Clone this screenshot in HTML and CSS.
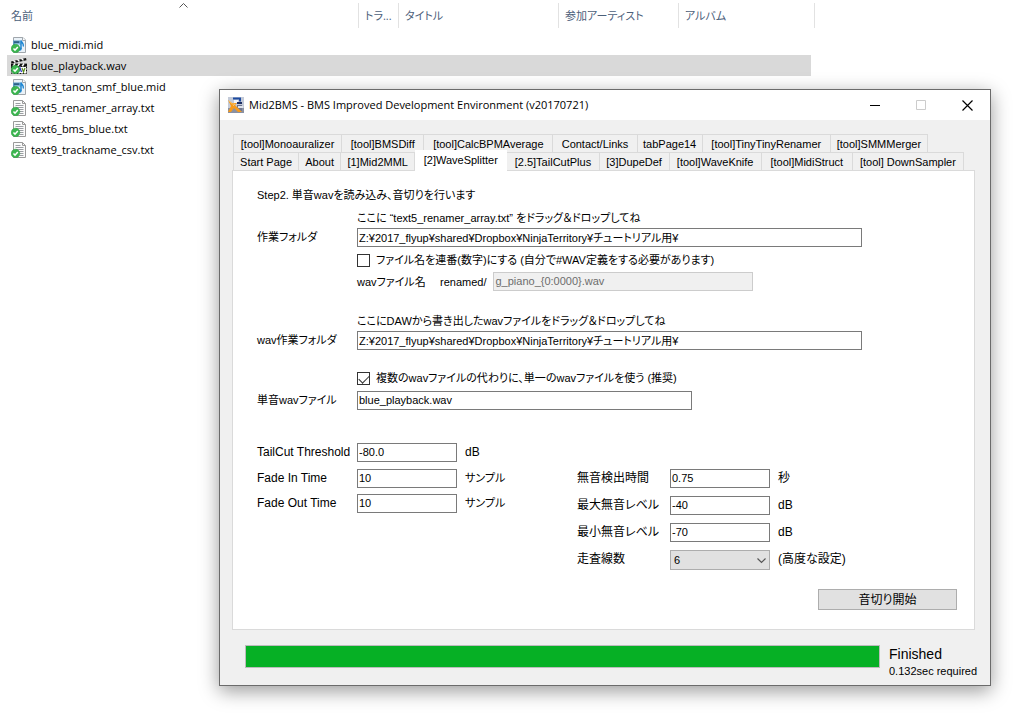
FILE: index.html
```html
<!DOCTYPE html>
<html lang="ja">
<head>
<meta charset="utf-8">
<title>Mid2BMS</title>
<link rel="stylesheet" href="styles.css">
</head>
<body>
<svg class="defs" aria-hidden="true">
  <defs>
    <symbol id="ok" viewBox="0 0 16 16">
      <circle cx="4.500" cy="11.500" r="4.300" fill="#3cb650" stroke="#2a9a3f" stroke-width=".5"/>
      <path d="M2.500 11.600l1.500 1.600L6.800 10" fill="none" stroke="#fff" stroke-width="1.500"/>
    </symbol>
    <symbol id="mid" viewBox="0 0 16 16">
      <path d="M2.500.5h9.500l2.500 2.500v12.500h-12z" fill="#eaf2f8" stroke="#a0a6ac"/>
      <path d="M11.500.5v3h3" fill="#fff" stroke="#a0a6ac"/>
      <path d="M2 3.500h7.500V8H2z" fill="#5b9bc6"/>
      <path d="M3 4.500h5v1.200H3z" fill="#1e4868"/>
      <path d="M4 6.500h5V8H4z" fill="#a9d3ee"/>
      <path d="M10 12V3.500c.6 2.500 3.200 2.800 2.300 6" fill="none" stroke="#1f86d2" stroke-width="1.500"/>
      <ellipse cx="8.800" cy="12" rx="1.900" ry="1.700" fill="#1f86d2"/>
      <use href="#ok"/>
    </symbol>
    <symbol id="txt" viewBox="0 0 16 16">
      <path d="M2.500.5h9l3 3v12h-12z" fill="#fbfbfb" stroke="#9a9a9a"/>
      <path d="M11.500.5v3h3" fill="none" stroke="#9a9a9a"/>
      <path d="M4.500 3.500h5M4.500 5.500h8M4.500 7.500h8M4.500 9.500h8M6.500 11.500h6M8.500 13.500h4" stroke="#9a9ea2"/>
      <use href="#ok"/>
    </symbol>
    <symbol id="wav" viewBox="0 0 16 16">
      <path d="M0 5h16v11H0z" fill="#fff"/>
      <path d="M0 3.500l15-3.500.5 2.200L.5 5.500z" fill="#111"/>
      <path d="M2.500 2.500l2 2M6.500 1.500l2 2M10.500.6l2 2" stroke="#fff" stroke-width="1.400"/>
      <path d="M0 5.500h16v3H0z" fill="#111"/>
      <path d="M2 8.500l2-3M6.500 8.500l2-3M11 8.500l2-3" stroke="#fff" stroke-width="1.400"/>
      <path d="M.5 8.500h15v7H.5z" fill="none" stroke="#111" stroke-dasharray="2 1"/>
      <path d="M7.500 14l1.500-4 1.500 4" fill="none" stroke="#2426c8" stroke-width="1.200"/>
      <path d="M11 10l1.500 4 1.500-4" fill="none" stroke="#5c8f1e" stroke-width="1.200"/>
      <use href="#ok"/>
    </symbol>
  </defs>
</svg>

<main class="explorer">
  <div class="columns">
    <div class="column">名前
      <svg class="sort" viewBox="0 0 9 5" aria-hidden="true"><path d="M.5 4.500l4-4 4 4" fill="none" stroke="#555"/></svg>
    </div>
    <div class="column">トラ...</div>
    <div class="column">タイトル</div>
    <div class="column">参加アーティスト</div>
    <div class="column">アルバム</div>
  </div>
  <ul class="files">
    <li class="file"><svg class="file-icon"><use href="#mid"/></svg>blue_midi.mid</li>
    <li class="file selected"><svg class="file-icon"><use href="#wav"/></svg>blue_playback.wav</li>
    <li class="file"><svg class="file-icon"><use href="#mid"/></svg>text3_tanon_smf_blue.mid</li>
    <li class="file"><svg class="file-icon"><use href="#txt"/></svg>text5_renamer_array.txt</li>
    <li class="file"><svg class="file-icon"><use href="#txt"/></svg>text6_bms_blue.txt</li>
    <li class="file"><svg class="file-icon"><use href="#txt"/></svg>text9_trackname_csv.txt</li>
  </ul>
</main>

<section class="window">
  <header class="titlebar">
    <svg class="app-icon" viewBox="0 0 16 16" aria-hidden="true">
      <path d="M0 0h16v16H0z" fill="#c3cad8"/>
      <path d="M0 11h16v5H0z" fill="#8a91a3"/>
      <path d="M5 1.500h7v3" fill="none" stroke="#1d4aa0" stroke-width="2"/>
      <path d="M6 3h4v3H6z" fill="#f2f5fa"/>
      <path d="M9 5h5v2H9z" fill="#1c2f63"/>
      <path d="M9 8h5v6H9z" fill="#6d7690"/>
      <path d="M10 9h5v2h-5z" fill="#dfe3ec"/>
      <path d="M0 3l4 3h5l-2 2 7 7h-4L6 11l-3 4H0l3-6z" fill="#f59a1c"/>
      <path d="M1 4l3.500 3H7L5 9" fill="none" stroke="#fbc263"/>
    </svg>
    <h1 class="title">Mid2BMS - BMS Improved Development Environment (v20170721)</h1>
    <button class="caption" aria-label="最小化"><svg viewBox="0 0 11 11"><path d="M0 5.500h10" stroke="#000"/></svg></button>
    <button class="caption" aria-label="最大化" disabled><svg viewBox="0 0 11 11"><path d="M.5.5h9v9h-9z" fill="none" stroke="#ccc"/></svg></button>
    <button class="caption" aria-label="閉じる"><svg viewBox="0 0 11 11"><path d="M.5.5l10 10M10.500.5l-10 10" stroke="#000" stroke-width="1.200"/></svg></button>
  </header>

  <div class="client">
    <div class="tabs" role="tablist">
      <div class="tab-row tab-row-back">
        <button class="tab" role="tab">[tool]Monoauralizer</button>
        <button class="tab" role="tab">[tool]BMSDiff</button>
        <button class="tab" role="tab">[tool]CalcBPMAverage</button>
        <button class="tab" role="tab">Contact/Links</button>
        <button class="tab" role="tab">tabPage14</button>
        <button class="tab" role="tab">[tool]TinyTinyRenamer</button>
        <button class="tab" role="tab">[tool]SMMMerger</button>
      </div>
      <div class="tab-row tab-row-front">
        <button class="tab" role="tab">Start Page</button>
        <button class="tab" role="tab">About</button>
        <button class="tab" role="tab">[1]Mid2MML</button>
        <button class="tab active" role="tab" aria-selected="true">[2]WaveSplitter</button>
        <button class="tab" role="tab">[2.5]TailCutPlus</button>
        <button class="tab" role="tab">[3]DupeDef</button>
        <button class="tab" role="tab">[tool]WaveKnife</button>
        <button class="tab" role="tab">[tool]MidiStruct</button>
        <button class="tab" role="tab">[tool] DownSampler</button>
      </div>
    </div>

    <form class="panel">
      <p class="step">Step2. 単音wavを読み込み、音切りを行います</p>

      <div class="group group-work">
        <p class="hint">ここに “text5_renamer_array.txt” をドラッグ＆ドロップしてね</p>
        <label class="label" for="work">作業フォルダ</label>
        <input class="box path" id="work" type="text" value="Z:¥2017_flyup¥shared¥Dropbox¥NinjaTerritory¥チュートリアル用¥">
        <div class="field check"><input class="tick" id="serial" type="checkbox"><label for="serial">ファイル名を連番(数字)にする (自分で#WAV定義をする必要があります)</label></div>
        <div class="field rename">
          <label for="pattern"><span class="rename-name">wavファイル名</span>renamed/</label>
          <input class="box pattern" id="pattern" type="text" value="g_piano_{0:0000}.wav" disabled>
        </div>
      </div>

      <div class="group group-wav">
        <p class="hint">ここにDAWから書き出したwavファイルをドラッグ＆ドロップしてね</p>
        <label class="label" for="wavdir">wav作業フォルダ</label>
        <input class="box path" id="wavdir" type="text" value="Z:¥2017_flyup¥shared¥Dropbox¥NinjaTerritory¥チュートリアル用¥">
        <div class="field check"><input class="tick" id="single" type="checkbox" checked><label for="single">複数のwavファイルの代わりに、単一のwavファイルを使う (推奨)</label></div>
        <label class="label" for="wavfile">単音wavファイル</label>
        <input class="box wavfile" id="wavfile" type="text" value="blue_playback.wav">
      </div>

      <div class="numbers">
        <div class="group-fade">
          <label for="tail">TailCut Threshold</label><input class="box" id="tail" type="text" value="-80.0"><span>dB</span>
          <label for="fadein">Fade In Time</label><input class="box" id="fadein" type="text" value="10"><span class="kana">サンプル</span>
          <label for="fadeout">Fade Out Time</label><input class="box" id="fadeout" type="text" value="10"><span class="kana">サンプル</span>
        </div>
        <div class="group-silence">
          <label for="silence">無音検出時間</label><input class="box" id="silence" type="text" value="0.75"><span>秒</span>
          <label for="max">最大無音レベル</label><input class="box" id="max" type="text" value="-40"><span>dB</span>
          <label for="min">最小無音レベル</label><input class="box" id="min" type="text" value="-70"><span>dB</span>
          <label for="lines">走査線数</label>
          <div class="drop">
            <select class="select" id="lines"><option>6</option></select>
            <svg class="arrow" viewBox="0 0 9 6" aria-hidden="true"><path d="M.5.5l4 4 4-4" fill="none" stroke="#555" stroke-width="1.200"/></svg>
          </div>
          <span>(高度な設定)</span>
        </div>
      </div>

      <button class="start" type="button">音切り開始</button>
    </form>

    <footer class="status">
      <progress class="progress" max="100" value="100" aria-label="進捗"></progress>
      <div class="result">
        <p class="finished">Finished</p>
        <p class="elapsed">0.132sec required</p>
      </div>
    </footer>
  </div>
</section>
</body>
</html>
```
FILE: styles.css
```css
* { box-sizing: border-box; }

body {
  margin: 0;
  min-height: 100vh;
  background: #fff;
  color: #000;
  font: 12px/16px "Open Sans", "Noto Sans CJK JP", sans-serif;
  font-feature-settings: "palt";
}

p, h1, ul { margin: 0; padding: 0; }
button, input, select { font: inherit; font-feature-settings: inherit; color: inherit; margin: 0; }

.defs { position: absolute; width: 0; height: 0; }

/* file list */
.columns {
  display: grid;
  grid-template-columns: 359px 40px 160px 120px 136px;
  padding-top: 3px;
  color: #4c607a;
  font-size: 11px;
}
.column {
  position: relative;
  height: 25px;
  padding-left: 6px;
  border-right: 1px solid #e2e2e2;
  line-height: 25px;
  white-space: nowrap;
}
.column:first-child { padding-left: 11px; }
.sort { position: absolute; top: 0; left: 50%; width: 9px; height: 5px; }
.files { list-style: none; padding: 6px 0 0 7px; font-size: 11px; }
.file {
  display: flex;
  align-items: center;
  gap: 4px;
  height: 21px;
  max-width: 804px;
  padding-left: 4px;
}
.file.selected { background: #d9d9d9; }
.file-icon { width: 16px; height: 16px; }

/* dialog window */
.window {
  position: absolute;
  top: 89px;
  left: 219px;
  right: 33px;
  border: 1px solid #6b6b6b;
  background: #f0f0f0;
  box-shadow: 0 5px 18px rgba(0, 0, 0, .4);
}
.titlebar { display: flex; align-items: center; height: 30px; padding-left: 8px; background: #fff; }
.app-icon { width: 16px; height: 16px; margin-right: 5px; }
.title { flex: 1; font-size: 11px; font-weight: 400; white-space: nowrap; }
.caption {
  display: flex;
  align-items: center;
  justify-content: center;
  width: 46px;
  height: 30px;
  padding: 0;
  border: 0;
  background: none;
}
.caption svg { width: 11px; height: 11px; }

.client {
  padding: 14px 15px 6px 12px;
  font-family: "Liberation Sans", "Noto Sans CJK JP", sans-serif;
}

.tab-row { display: grid; padding-left: 1px; }
.tab-row-back { grid-template-columns: 109fr 82fr 129fr 84fr 65fr 128fr 97fr; margin-right: 47px; }
.tab-row-front { grid-template-columns: 66fr 42fr 74fr 92fr 92fr 70fr 92fr 91fr 111fr; margin-right: 11px; }
.tab {
  height: 18px;
  padding: 0;
  border: 1px solid #dadada;
  border-width: 1px 1px 0 0;
  background: #f0f0f0;
  font-size: 11px;
  line-height: 16px;
  text-align: center;
  white-space: nowrap;
}
.tab:first-child { border-left-width: 1px; }
.tab.active {
  z-index: 1;
  height: 21px;
  margin: -2px 0 -1px;
  padding-bottom: 2px;
  border-color: #fff;
  background: #fff;
}

.panel {
  padding: 16px 17px 19px 24px;
  border: 1px solid #dadada;
  background: #fff;
}
.step, .hint, .check, .rename, .label { font-size: 11px; white-space: nowrap; }
.group { display: grid; grid-template-columns: 100px 1fr; align-items: start; }
.group-work { grid-template-rows: 18px 24px 20px 19px; margin-top: 7px; }
.group-wav { grid-template-rows: 18px 39px 21px 19px; margin-top: 22px; }
.hint, .field { grid-column: 2; }
.label { grid-column: 1; line-height: 19px; }

.box {
  width: 100%;
  height: 19px;
  padding: 0 2px 2px 1px;
  border: 1px solid #7a7a7a;
  border-radius: 0;
  background: #fff;
  font-size: 11px;
  line-height: 15px;
}
.box:disabled { border: 1px solid #ccc; background: #f0f0f0; color: #6d6d6d; }
.path { max-width: 505px; }
.wavfile { max-width: 335px; }
.pattern { width: 260px; }

.check { display: flex; align-items: center; gap: 6px; }
.tick {
  appearance: none;
  width: 13px;
  height: 13px;
  border: 1px solid #333;
  background: #fff;
}
.tick:checked::before {
  content: "";
  display: block;
  width: 9px;
  height: 5px;
  margin: 2px 1px;
  border: solid #333;
  border-width: 0 0 1px 1px;
  transform: rotate(-45deg);
}
.rename { display: flex; align-items: center; gap: 7px; }
.rename-name { display: inline-block; width: 83px; }

.numbers { display: grid; grid-template-columns: 320px 1fr; margin-top: 33px; line-height: 19px; }
.group-fade, .group-silence { display: grid; column-gap: 8px; align-items: start; align-content: start; white-space: nowrap; }
.group-fade { grid-template-columns: 92px 100px 1fr; grid-template-rows: 26px 25px 19px; }
.group-silence { grid-template-columns: 85px 100px 1fr; grid-template-rows: 27px 27px 27px 20px; padding-top: 26px; }
.kana { font-size: 11px; }
.drop { position: relative; }
.select {
  appearance: none;
  display: block;
  width: 100%;
  height: 20px;
  padding: 0 3px;
  border: 1px solid #adadad;
  border-radius: 0;
  background: #e1e1e1;
  font-size: 11px;
}
.arrow { position: absolute; top: 8px; right: 4px; width: 9px; height: 6px; pointer-events: none; }

.start {
  display: block;
  width: 139px;
  height: 21px;
  margin: 19px 0 0 auto;
  padding: 0;
  border: 1px solid #adadad;
  background: #e1e1e1;
}

.status { display: flex; align-items: flex-start; gap: 9px; padding: 15px 0 0 13px; }
.progress {
  appearance: none;
  flex: 1;
  height: 23px;
  border: 1px solid #bcbcbc;
  background: #e6e6e6;
}
.progress::-webkit-progress-bar { background: #e6e6e6; }
.progress::-webkit-progress-value { background: #06b025; }
.result { width: 86px; white-space: nowrap; }
.finished { font-size: 14px; line-height: 18px; }
.elapsed { font-size: 11px; }
```
